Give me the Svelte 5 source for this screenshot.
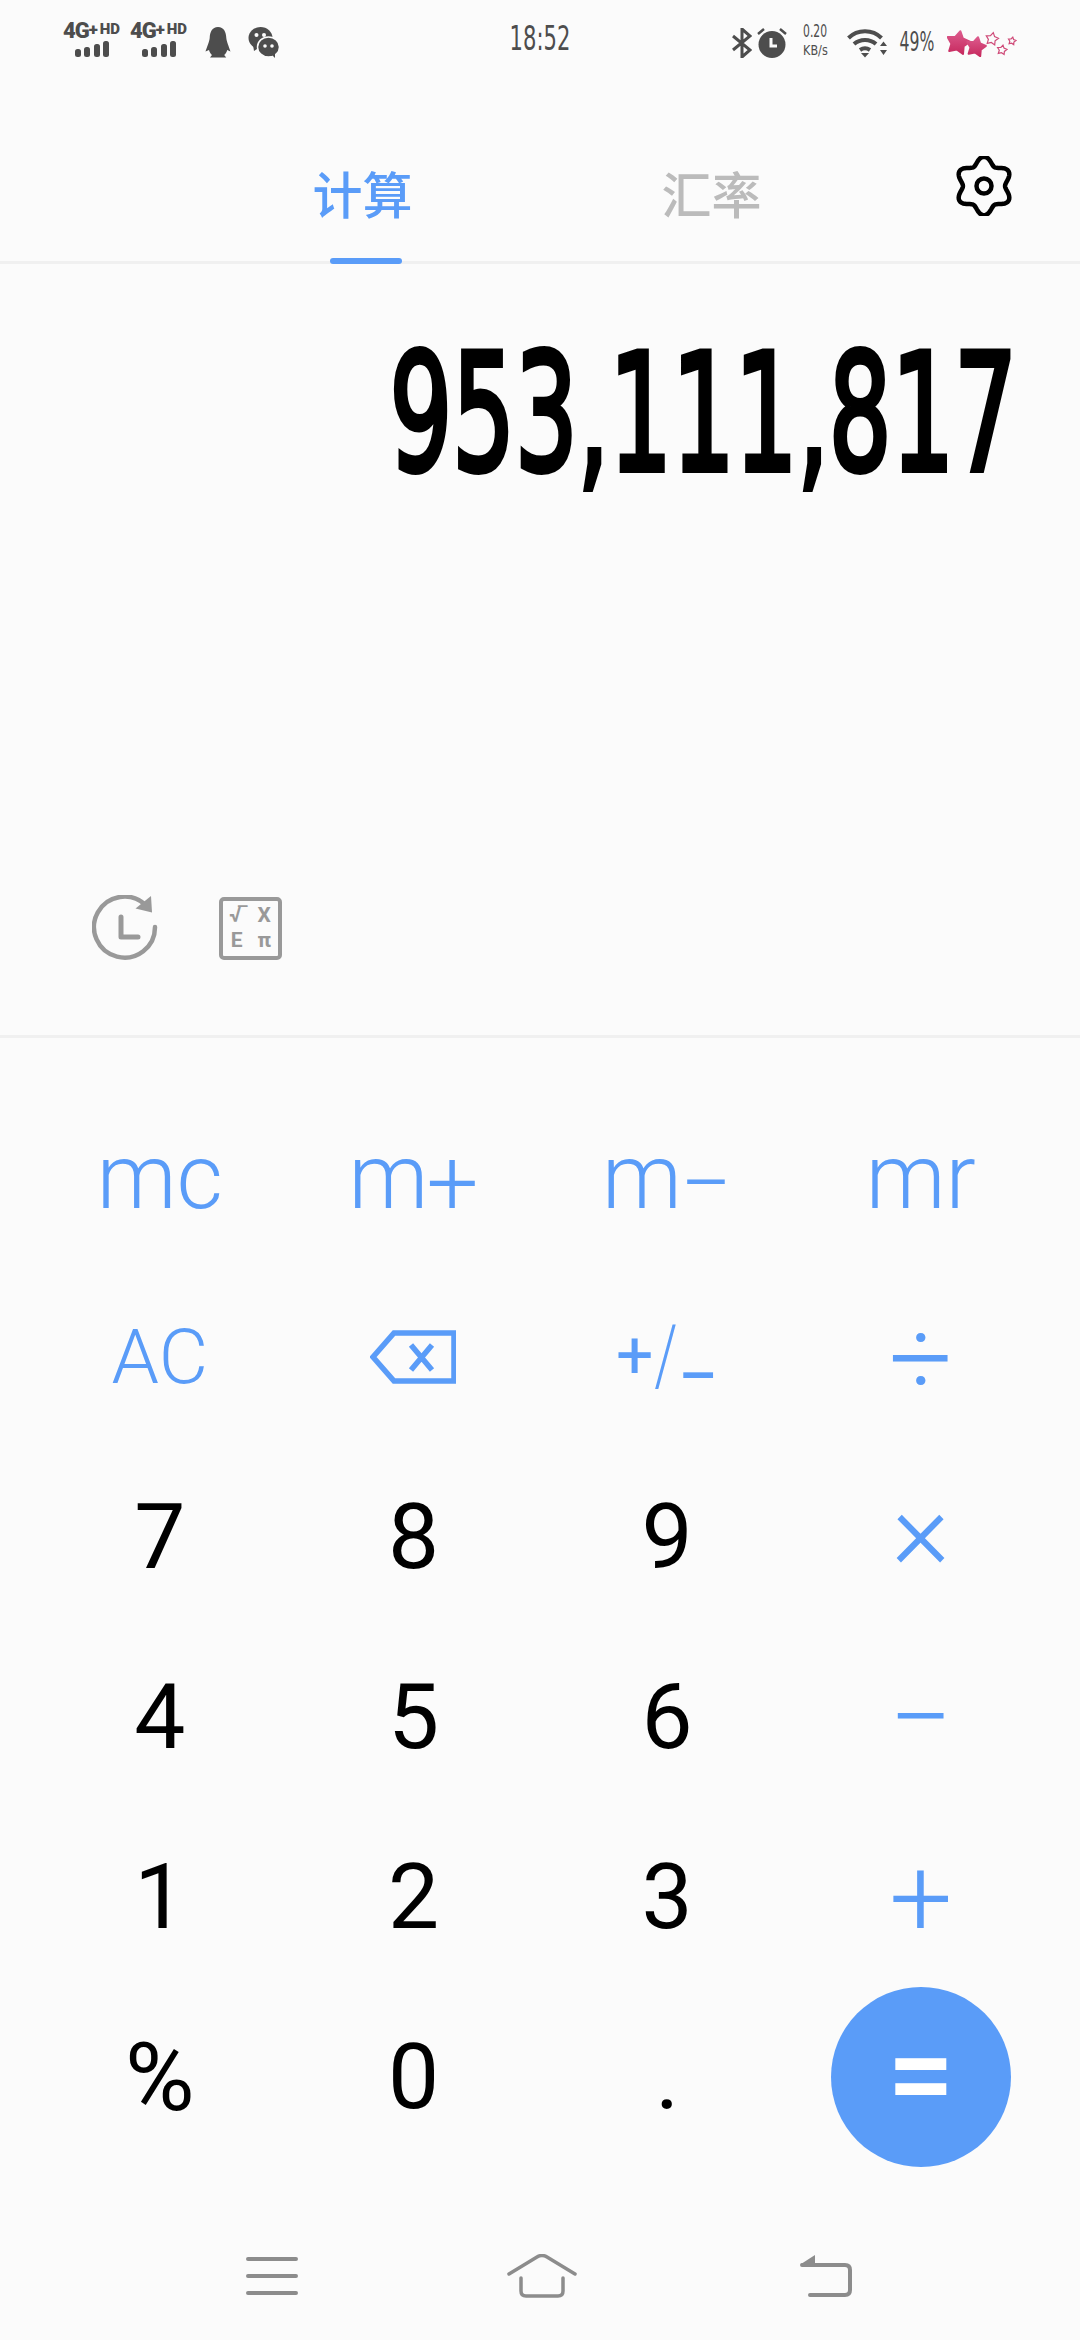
<script>
  const digits = [
    ['7', '8', '9', '×'],
    ['4', '5', '6', '−'],
    ['1', '2', '3', '+'],
  ];

  function star(cx, cy, r) {
    const pts = [];
    for (let i = 0; i < 10; i++) {
      const rad = i % 2 === 0 ? r : r * 0.55;
      const a = -Math.PI / 2 + (i * Math.PI) / 5 + 0.2;
      pts.push((cx + rad * Math.cos(a)).toFixed(1) + ',' + (cy + rad * Math.sin(a)).toFixed(1));
    }
    return pts.join(' ');
  }

  function gear() {
    const pts = [];
    for (let i = 0; i < 120; i++) {
      const t = (i * Math.PI) / 60;
      const r = 25.5 + 3.8 * Math.cos(6 * t);
      pts.push((30 + 0.97 * r * Math.sin(t)).toFixed(2) + ',' + (30 - r * Math.cos(t)).toFixed(2));
    }
    return pts.join(' ');
  }
</script>

<div class="phone">
  <header class="status">
    <div class="status-left">
      {#each [0, 1] as sim}
        <div class="sim">
          <div class="sim-label"><span class="g">4G</span><span class="p">+</span><span class="hd">HD</span></div>
          <svg width="36" height="16" viewBox="0 0 36 16" fill="#4d4d4d">
            <rect x="1" y="8" width="6" height="8" rx="2.5" />
            <rect x="10" y="6" width="6" height="10" rx="2.5" />
            <rect x="20" y="3" width="6" height="13" rx="2.5" />
            <rect x="29" y="0" width="6" height="16" rx="2.5" />
          </svg>
        </div>
      {/each}
      <svg class="qq" width="26" height="31" viewBox="0 0 26 31" fill="#4d4d4d">
        <path d="M13 0c6 0 8 5 8.300 11 0.200 3 2.700 9 4.200 13.500l-3.300-1.500c-0.500 2-1.500 3.600-3 5l2 2.500H5l2-2.500c-1.500-1.400-2.500-3-3-5L0.500 24.500C2 20 4.500 14 4.700 11 5 5 7 0 13 0z" />
      </svg>
      <svg class="wechat" width="31" height="31" viewBox="0 0 31 31">
        <ellipse cx="12.500" cy="11" rx="12" ry="11" fill="#4d4d4d" />
        <path d="M5 18l1 6 6-4z" fill="#4d4d4d" />
        <circle cx="8.500" cy="8" r="2" fill="#fbfbfb" />
        <circle cx="16" cy="8" r="2" fill="#fbfbfb" />
        <ellipse cx="20.500" cy="20" rx="11" ry="10" fill="#4d4d4d" stroke="#fbfbfb" stroke-width="1.500" />
        <path d="M24 28l3 3v-5z" fill="#4d4d4d" />
        <circle cx="17" cy="19" r="1.800" fill="#fbfbfb" />
        <circle cx="24" cy="19" r="1.800" fill="#fbfbfb" />
      </svg>
    </div>

    <div class="time"><span>18:52</span></div>

    <div class="status-right">
      <svg width="20" height="30" viewBox="0 0 20 30" fill="none" stroke="#4d4d4d" stroke-width="3">
        <path d="M1 8l17 14-8 7V1l8 7L1 22" />
      </svg>
      <svg class="alarm" width="30" height="30" viewBox="0 0 30 30">
        <circle cx="15" cy="16.500" r="13.500" fill="#4d4d4d" />
        <path d="M1 6l6-5M29 6l-6-5" stroke="#4d4d4d" stroke-width="2.500" />
        <path d="M14 10v8h6" stroke="#fbfbfb" stroke-width="3" fill="none" />
      </svg>
      <div class="speed"><span class="rate">0.20</span><span class="unit">KB/s</span></div>
      <svg class="wifi" width="40" height="29" viewBox="0 0 40 29" fill="none" stroke="#4d4d4d" stroke-width="4">
        <path d="M1.500 9c9-9 24-9 33 0" />
        <path d="M7 15c6-5.500 16-5.500 22 0" />
        <path d="M13 21c3-2 7-2 10 0" />
        <path d="M14 24h8l-4 4.500z" fill="#4d4d4d" stroke="none" />
        <path d="M33 17l3.500-4.500 3.500 4.500zM33 21h7l-3.500 5z" fill="#4d4d4d" stroke="none" />
      </svg>
      <div class="battery"><span>49%</span></div>
      <svg class="stars" width="70" height="28" viewBox="948 30 70 28">
        <defs>
          <linearGradient id="pink" x1="0" y1="0" x2="0" y2="1">
            <stop offset="0" stop-color="#dc5a8c" />
            <stop offset="1" stop-color="#c72a5f" />
          </linearGradient>
        </defs>
        <polygon points={star(959, 43, 12)} fill="url(#pink)" stroke="url(#pink)" stroke-width="2" stroke-linejoin="round" />
        <polygon points={star(977, 47, 10)} fill="url(#pink)" stroke="url(#pink)" stroke-width="2" stroke-linejoin="round" />
        <polygon points={star(993, 39, 6.500)} fill="none" stroke="#cf4a78" stroke-width="1.200" />
        <polygon points={star(1003, 50, 5)} fill="none" stroke="#cf4a78" stroke-width="1.200" />
        <polygon points={star(1013, 41, 4)} fill="none" stroke="#cf4a78" stroke-width="1.200" />
      </svg>
    </div>
  </header>

  <nav class="tabs">
    <div class="tab active">计算<span class="underline"></span></div>
    <div class="tab">汇率</div>
    <svg class="gear" width="60" height="60" viewBox="0 0 60 60" fill="none" stroke="#000" stroke-width="4.500">
      <polygon points={gear()} stroke-linejoin="round" />
      <circle cx="30" cy="30" r="7.500" />
    </svg>
  </nav>

  <section class="display">
    <div class="result">953,111,817</div>
    <div class="tools">
      <svg width="66" height="66" viewBox="0 0 66 66" fill="none" stroke="#999" stroke-width="4.500">
        <path d="M63 32a30.500 30.500 0 1 1-9.500-22" stroke-linecap="round" />
        <path d="M59 1l1 16.500-16.500-4z" fill="#999" stroke="none" />
        <path d="M29 22v20h17" stroke-width="5" stroke-linecap="round" stroke-linejoin="round" />
      </svg>
      <div class="sci">
        <span class="root">√‾</span><span>X</span><span>E</span><span>π</span>
      </div>
    </div>
  </section>

  <main class="keypad">
    <button class="key op mem">mc</button>
    <button class="key op mem">m<span class="mem-sign">+</span></button>
    <button class="key op mem">m<span class="mem-sign">−</span></button>
    <button class="key op mem">mr</button>

    <button class="key op ac">AC</button>
    <button class="key op" aria-label="delete">
      <svg width="86" height="54" viewBox="0 0 86 54" fill="none" stroke="#5a9cf8" stroke-width="5.500">
        <path d="M84 3H24L3 27l21 24h60z" />
        <path d="M41 15l21 25M62 15L41 40" />
      </svg>
    </button>
    <button class="key op sign"><span class="s-plus">+</span><span class="s-slash">/</span><span class="s-dash">–</span></button>
    <button class="key op sym">÷</button>

    {#each digits as row}
      {#each row as d, i}
        <button class="key" class:op={i === 3} class:sym={i === 3} class:mul={d === '×'}>{d}</button>
      {/each}
    {/each}

    <button class="key pct">%</button>
    <button class="key">0</button>
    <button class="key">.</button>
    <button class="key"><span class="equals">=</span></button>
  </main>

  <footer class="navbar">
    <svg width="52" height="38" viewBox="0 0 52 38" stroke="#8c8c8c" stroke-width="4" stroke-linecap="round">
      <path d="M2 2h48M2 19h48M2 36h48" />
    </svg>
    <svg width="70" height="44" viewBox="0 0 70 44" fill="none" stroke="#8c8c8c" stroke-width="3.500" stroke-linecap="round" stroke-linejoin="round">
      <path d="M2 20L30 3q5-3 10 0l28 17" />
      <path d="M14 24v13q0 5 5 5h32q5 0 5-5V24" />
    </svg>
    <svg width="52" height="42" viewBox="0 0 52 42" fill="none" stroke="#8c8c8c" stroke-width="4" stroke-linecap="round">
      <path d="M2 10h43q5 0 5 5v20q0 5-5 5H10" />
      <path d="M1 9L15 0v9z" fill="#8c8c8c" stroke="none" />
    </svg>
  </footer>
</div>

<style>
  :global(body) {
    margin: 0;
    background: #fbfbfb;
  }

  .phone {
    width: 1080px;
    height: 2340px;
    background: #fbfbfb;
    display: flex;
    flex-direction: column;
    font-family: Roboto, 'Noto Sans CJK SC', sans-serif;
    overflow: hidden;
  }

  .status {
    height: 76px;
    box-sizing: border-box;
    padding: 22px 63px 0;
    display: grid;
    grid-template-columns: 1fr auto 1fr;
    color: #4d4d4d;
  }

  .status-left {
    display: flex;
    align-items: flex-start;
    gap: 9px;
  }

  .sim {
    width: 58px;
    display: flex;
    flex-direction: column;
    align-items: center;
    gap: 1px;
  }

  .sim-label {
    display: flex;
    align-items: flex-start;
    font-weight: 900;
    line-height: 18px;
    height: 18px;
    white-space: nowrap;
    margin-left: -1px;
  }

  .g { font-size: 22px; letter-spacing: -1px; }
  .p { font-size: 17px; line-height: 14px; }
  .hd { font-size: 15px; line-height: 15px; margin-left: 2px; }

  .qq { margin: 5px 0 0 8px; }
  .wechat { margin: 5px 0 0 8px; }

  .time, .battery, .rate, .unit {
    font-family: 'DejaVu Sans', sans-serif;
    display: flex;
    justify-content: center;
    white-space: nowrap;
  }

  .time {
    font-size: 34px;
    line-height: 32px;
    width: 60px;
  }

  .time span { display: inline-block; transform: scaleX(0.62); }

  .status-right {
    display: flex;
    justify-content: flex-end;
    align-items: flex-start;
  }

  .status-right svg { margin-top: 6px; }
  .alarm { margin-left: 5px; }

  .speed {
    width: 30px;
    margin-left: 13px;
    display: flex;
    flex-direction: column;
    align-items: center;
    gap: 3px;
  }

  .rate {
    font-size: 18px;
    line-height: 18px;
    transform: scaleX(0.6);
  }

  .unit {
    font-size: 14px;
    line-height: 14px;
    transform: scaleX(0.8);
  }

  .status-right .wifi { margin-left: 17px; margin-top: 7px; }

  .battery {
    font-size: 27px;
    line-height: 30px;
    margin: 5px 0 0 11px;
    width: 38px;
  }

  .battery span { display: inline-block; transform: scaleX(0.58); }

  .status-right .stars { margin: 8px 0 0 11px; }

  .tabs {
    height: 188px;
    box-sizing: border-box;
    border-bottom: 3px solid #f0f0f0;
    padding: 0 0 0 188px;
    display: flex;
    align-items: flex-start;
  }

  .tab {
    position: relative;
    width: 349px;
    height: 185px;
    padding-top: 91px;
    box-sizing: border-box;
    text-align: center;
    font-size: 50px;
    line-height: 60px;
    color: #bbb;
    font-weight: 500;
  }

  .tab.active { color: #5a9cf8; }

  .underline {
    position: absolute;
    left: 50%;
    bottom: -3px;
    width: 72px;
    height: 6px;
    margin-left: -33px;
    border-radius: 3px;
    background: #5a9cf8;
  }

  .gear { margin: 80px 0 0 68px; }

  .display {
    height: 774px;
    box-sizing: border-box;
    border-bottom: 3px solid #f0f0f0;
    display: flex;
    flex-direction: column;
    justify-content: space-between;
    padding: 60px 63px 74px 92px;
  }

  .result {
    align-self: flex-end;
    font-family: 'DejaVu Sans', sans-serif;
    font-size: 163px;
    line-height: 180px;
    color: #000;
    white-space: nowrap;
    -webkit-text-stroke: 6px #000;
    paint-order: stroke fill;
    transform: scaleX(0.605);
    transform-origin: right center;
  }

  .tools {
    display: flex;
    align-items: center;
    gap: 61px;
  }

  .sci {
    width: 63px;
    height: 63px;
    box-sizing: border-box;
    border: 4.500px solid #999;
    border-radius: 5px;
    display: grid;
    grid-template-columns: 1fr 1fr;
    align-content: center;
    justify-items: center;
    color: #999;
    font-weight: 700;
    font-size: 21px;
    line-height: 25px;
  }

  .root { letter-spacing: -2px; }

  .keypad {
    display: grid;
    grid-template-columns: repeat(4, 253.670px);
    grid-auto-rows: 180px;
    padding: 49px 33px 0;
    flex: none;
  }

  .key {
    display: flex;
    align-items: center;
    justify-content: center;
    border: none;
    background: none;
    padding: 0;
    font-family: Roboto, sans-serif;
    font-size: 91px;
    font-weight: 400;
    color: #000;
  }

  .key.op { color: #5a9cf8; }
  .mem { font-size: 90px; font-weight: 300; }
  .mem-sign { font-size: 92px; line-height: 1; margin: 14px 0 0 -2px; }
  .ac { font-size: 76px; font-weight: 300; }

  .sign { font-size: 76px; font-weight: 300; align-items: flex-start; padding-top: 44px; line-height: 90px; }
  .s-plus { width: 38px; display: flex; justify-content: center; font-size: 66px; font-weight: 400; }
  .s-slash { width: 24px; display: flex; justify-content: center; font-size: 84px; transform: scaleX(0.7); }
  .s-dash { width: 41px; display: flex; justify-content: center; font-size: 76px; font-weight: 400; margin-top: 20px; transform: scaleX(0.8); }

  .sym { font-size: 112px; font-weight: 300; }
  .mul { padding-bottom: 16px; }
  .pct { font-size: 95px; }

  .equals {
    width: 180px;
    height: 180px;
    border-radius: 50%;
    background: #5a9cf8;
    color: #fff;
    font-size: 120px;
    font-weight: 500;
    line-height: 176px;
    text-align: center;
  }

  .navbar {
    flex: 1;
    display: grid;
    grid-template-columns: 246px 52px 209px 70px 223px 52px;
    align-items: center;
    padding-top: 44px;
  }

  .navbar svg:nth-child(1) { grid-column: 2; }
  .navbar svg:nth-child(2) { grid-column: 4; }
  .navbar svg:nth-child(3) { grid-column: 6; }
</style>
